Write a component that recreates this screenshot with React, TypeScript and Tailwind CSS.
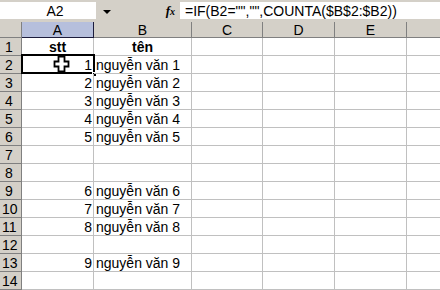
const cols = [
  { key: 'A', w: 'w-[72px]' },
  { key: 'B', w: 'w-[98px]' },
  { key: 'C', w: 'w-[71px]' },
  { key: 'D', w: 'w-[72px]' },
  { key: 'E', w: 'w-[72px]' },
  { key: '', w: 'w-[40px]' },
]

const rows: [string, string][] = [
  ['1', 'nguyễn văn 1'],
  ['2', 'nguyễn văn 2'],
  ['3', 'nguyễn văn 3'],
  ['4', 'nguyễn văn 4'],
  ['5', 'nguyễn văn 5'],
  ['', ''],
  ['', ''],
  ['6', 'nguyễn văn 6'],
  ['7', 'nguyễn văn 7'],
  ['8', 'nguyễn văn 8'],
  ['', ''],
  ['9', 'nguyễn văn 9'],
  ['', ''],
]

function Cursor() {
  return (
    <svg width="17" height="18" viewBox="0 0 17 18" className="absolute left-[31px] top-[-1px]">
      <path d="M5.5 1.5h6v5h4v5h-4v5h-6v-5h-4v-5h4z" fill="white" stroke="black" strokeWidth="1.8" />
    </svg>
  )
}

export default function App() {
  return (
    <div className="w-[440px] h-[290px] overflow-hidden bg-white font-['Liberation_Sans',Arial,sans-serif] text-[14px] text-black leading-none">
      {/* formula bar */}
      <div className="h-[22px] bg-[#d4d0c8] pt-[2px] pb-[3px] flex">
        <div className="w-[96px] bg-white flex items-center justify-center pl-[14px]">A2</div>
        <div className="w-[22px] flex items-center justify-center">
          <span className="border-x-[4px] border-t-[4px] border-x-transparent border-t-black mt-[2px]" />
        </div>
        <div className="w-[62px] flex items-center justify-end pr-[5px]">
          <span className="font-['Liberation_Serif',serif] italic font-bold text-[13px]">f<span className="text-[10px]">x</span></span>
        </div>
        <div className="flex-1 bg-white flex items-center pl-[5px] whitespace-nowrap">=IF(B2="","",COUNTA($B$2:$B2))</div>
      </div>

      {/* column headers */}
      <div className="flex h-[16px]">
        <div className="w-[22px] shrink-0 bg-[#d4d0c8] border-r border-b border-[#808080]" />
        {cols.map((c) => (
          <div
            key={c.key}
            className={`${c.w} shrink-0 border-r border-b flex items-center justify-center ${
              c.key === 'A' ? 'bg-[#b6bfdc] border-[#1c1c3c]' : 'bg-[#d4d0c8] border-[#808080]'
            }`}
          >
            {c.key}
          </div>
        ))}
      </div>

      {/* row 1 */}
      <div className="flex h-[18px]">
        <div className="w-[22px] shrink-0 bg-[#d4d0c8] border-r border-b border-[#808080] pl-[5px] flex items-center">1</div>
        {cols.map((c) => (
          <div key={c.key} className={`${c.w} shrink-0 border-r border-b border-[#c0c0c0] flex items-center justify-center font-bold`}>
            {c.key === 'A' ? 'stt' : c.key === 'B' ? 'tên' : ''}
          </div>
        ))}
      </div>

      {rows.map(([n, name], i) => (
        <div key={i} className="flex h-[18px]">
          <div className="w-[22px] shrink-0 bg-[#d4d0c8] border-r border-b border-[#808080] pl-[2px] flex items-center">
            <span className={i + 2 < 10 ? 'pl-[3px]' : ''}>{i + 2}</span>
          </div>
          {cols.map((c) => (
            <div
              key={c.key}
              className={`${c.w} shrink-0 border-r border-b border-[#c0c0c0] flex items-center relative ${
                c.key === 'A' ? 'justify-end pr-[1px]' : 'pl-[2px]'
              }`}
            >
              {c.key === 'A' ? n : c.key === 'B' ? name : ''}
              {c.key === 'A' && i === 0 && (
                <>
                  <div className="absolute left-[-1px] top-[-2px] right-[-2px] bottom-[-1px] border-2 border-black" />
                  <div className="absolute right-[-4px] bottom-[-4px] w-[5px] h-[5px] bg-black border border-white" />
                  <Cursor />
                </>
              )}
            </div>
          ))}
        </div>
      ))}
    </div>
  )
}
